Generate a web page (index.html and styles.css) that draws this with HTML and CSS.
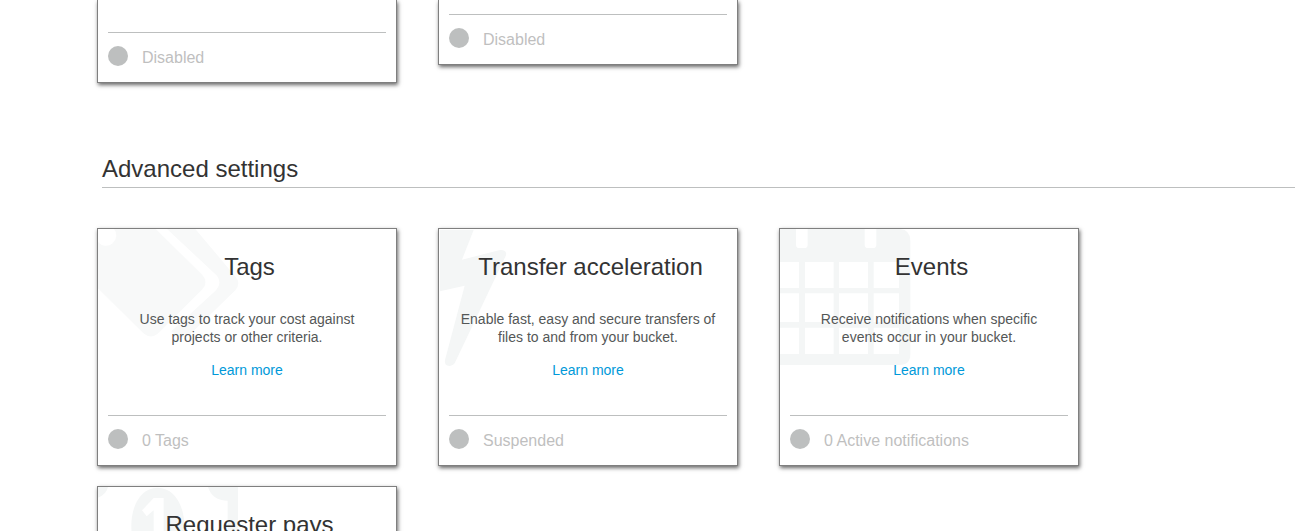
FILE: index.html
```html
<!DOCTYPE html>
<html lang="en">
<head>
<meta charset="utf-8">
<title>Bucket properties</title>
<link rel="stylesheet" href="styles.css">
</head>
<body>
<main class="page">
  <section class="cards cards-basic">
    <article class="card card-tall"><footer class="status"><span class="dot"></span>Disabled</footer></article>
    <article class="card card-short"><footer class="status"><span class="dot"></span>Disabled</footer></article>
  </section>
  <h2 class="section-title">Advanced settings</h2>
  <section class="cards">
    <article class="card">
      <svg class="art" viewBox="24 27 423 423" aria-hidden="true">
        <path class="pale" fill-rule="evenodd" d="M24 27H197L337 165Q356 187 337 208L202 342Q183 357 162 341L24 205ZM24 66A30 30 0 1 0 72 27H24Z"/>
        <path class="pale" d="M231 27H316L434 167Q455 189 436 211L302 341Q280 358 259 345L244 334L378 211Q397 190 381 167Z"/>
      </svg>
      <div class="body">
        <h3 class="title">Tags</h3>
        <p class="text">Use tags to track your cost against projects or other criteria.</p>
        <a class="link" href="#">Learn more</a>
      </div>
      <footer class="status"><span class="dot"></span>0 Tags</footer>
    </article>
    <article class="card">
      <svg class="art" viewBox="27 27 423 423" aria-hidden="true">
        <path d="M30 30H131L96 119L210 90Q231 89 228 106L74 430Q65 442 50 436Q43 431 45 420L104 197L30 214Z"/>
      </svg>
      <div class="body">
        <h3 class="title">Transfer acceleration</h3>
        <p class="text">Enable fast, easy and secure transfers of files to and from your bucket.</p>
        <a class="link" href="#">Learn more</a>
      </div>
      <footer class="status"><span class="dot"></span>Suspended</footer>
    </article>
    <article class="card">
      <svg class="art" viewBox="30 27 423 423" aria-hidden="true">
        <path fill-rule="evenodd" d="M30 27H78V74Q78 84 88 84H103Q113 84 113 74V27H284V74Q284 84 294 84H309Q319 84 319 74V27H390Q421 30 421 62V402Q421 435 388 435H30ZM30 126V204H87V126ZM105 126V204H191V126ZM207 126V204H294V126ZM311 126V204H387V126ZM30 220V306H87V220ZM105 220V306H191V220ZM207 220V306H294V220ZM311 220V306H387V220ZM30 323V402H87V323ZM105 323V402H191V323ZM207 323V402H294V323ZM311 323V402H387V323Z"/>
      </svg>
      <div class="body">
        <h3 class="title">Events</h3>
        <p class="text">Receive notifications when specific events occur in your bucket.</p>
        <a class="link" href="#">Learn more</a>
      </div>
      <footer class="status"><span class="dot"></span>0 Active notifications</footer>
    </article>
    <article class="card">
      <svg class="art" viewBox="24 261 423 423" aria-hidden="true">
        <path fill-rule="evenodd" d="M24 261H54Q50 282 24 293ZM354 261H444V684H413V302Q367 302 354 261ZM203 263C154 263 124 315 124 378S154 493 203 493S283 441 283 378S252 263 203 263ZM191 294H221V450H191V331L170 349L156 331Z"/>
      </svg>
      <div class="body">
        <h3 class="title">Requester pays</h3>
      </div>
    </article>
  </section>
</main>
</body>
</html>
```
FILE: styles.css
```css
* { box-sizing: border-box; }
body {
  margin: 0;
  height: 100vh;
  overflow: hidden;
  background: #fff;
  color: #333;
  font-family: "Liberation Sans", Arial, sans-serif;
}
.page { padding-left: 97px; }
.cards {
  display: grid;
  grid-template-columns: repeat(auto-fill, 300px);
  gap: 20px 41px;
  align-items: start;
}
.card {
  position: relative;
  display: flex;
  flex-direction: column;
  min-height: 238px;
  padding: 0 10px;
  border: 1px solid #7f7f7f;
  box-shadow: 1px 2px 4px rgba(0, 0, 0, 0.6);
  background: #fff;
  overflow: hidden;
}
.cards-basic .card { min-height: 0; border-top: 0; }
.cards-basic .card-tall { padding-top: 32px; }
.cards-basic .card-short { padding-top: 14px; }
.art {
  position: absolute;
  top: 0;
  left: 0;
  width: 141px;
  height: 141px;
  fill: #f4f6f6;
}
.pale { fill: #f8f9f9; }
.body {
  position: relative;
  flex: 1;
  padding: 24px 10px 0;
  text-align: center;
}
.title {
  margin: 0 0 29px;
  padding-left: 5px;
  font-size: 24px;
  line-height: 28px;
  font-weight: 400;
}
.text {
  margin: 0 0 15px;
  font-size: 14px;
  line-height: 18px;
  color: #545757;
}
.link {
  display: inline-block;
  font-size: 14px;
  line-height: 18px;
  color: #0099d9;
  text-decoration: none;
}
.status {
  position: relative;
  display: flex;
  align-items: flex-start;
  gap: 14px;
  height: 50px;
  padding-top: 13px;
  border-top: 1px solid #bdbfbf;
  font-size: 16px;
  line-height: 24px;
  color: #bfbfbf;
}
.dot {
  width: 20px;
  height: 20px;
  border-radius: 50%;
  background: #bdbfbf;
}
.section-title {
  margin: 72px 0 40px 5px;
  padding-bottom: 4px;
  border-bottom: 1px solid #bdbfbf;
  font-size: 24px;
  line-height: 28px;
  font-weight: 400;
}
```
